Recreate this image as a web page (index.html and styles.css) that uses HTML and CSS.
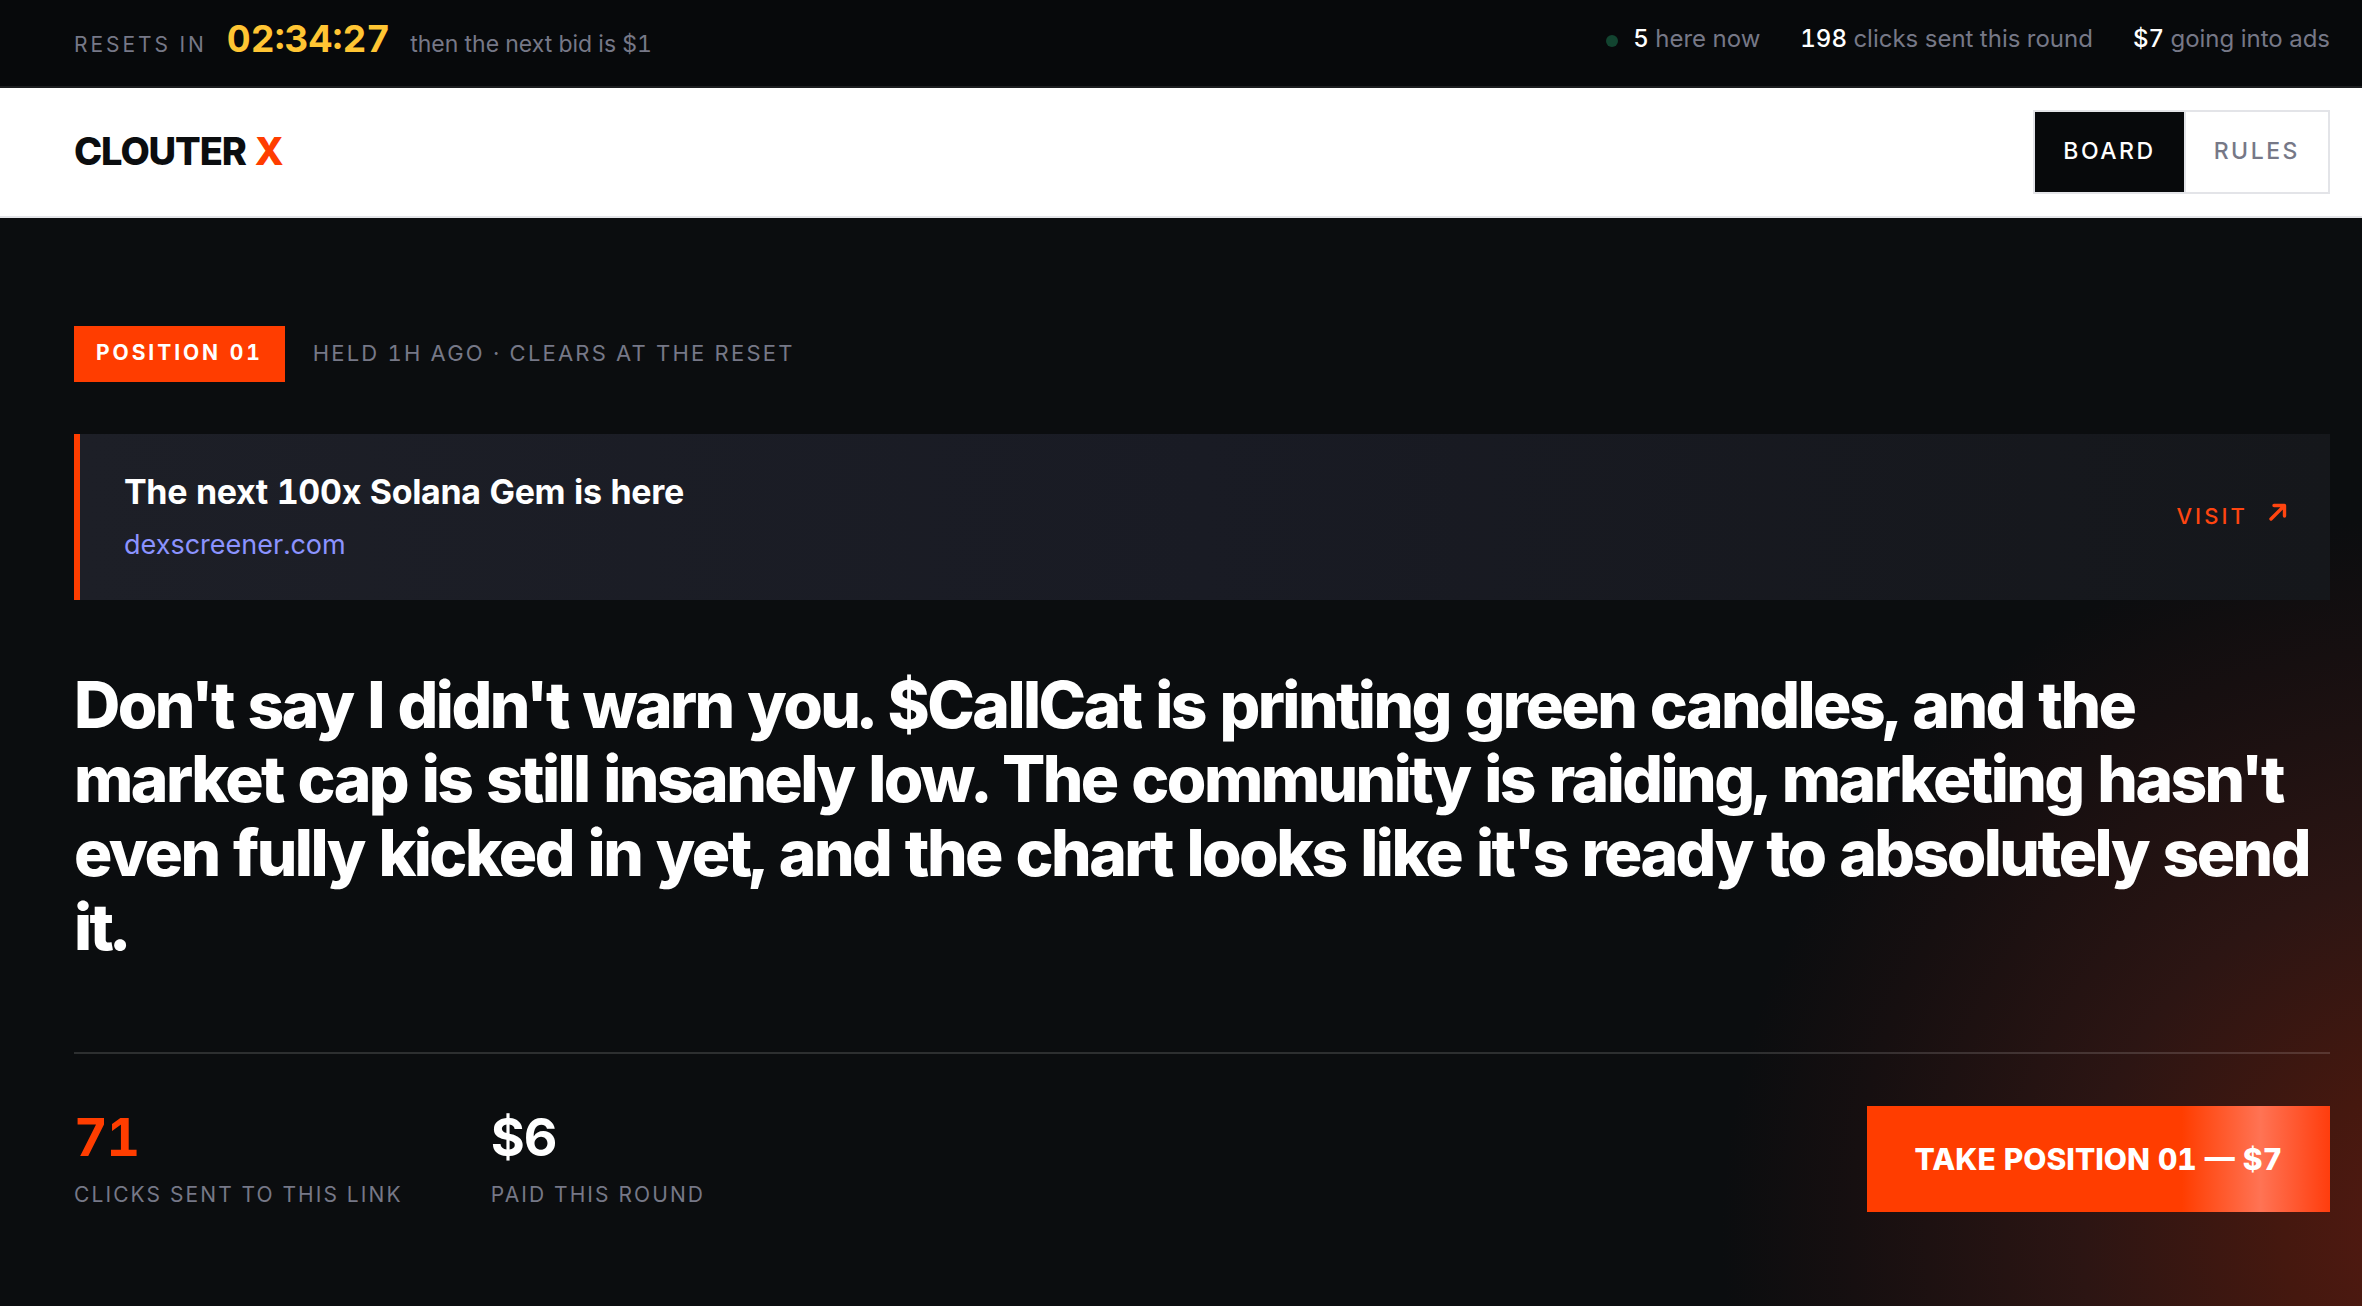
FILE: index.html
```html
<!DOCTYPE html>
<html lang="en">
<head>
    <meta charset="UTF-8">
    <meta name="viewport" content="width=device-width, initial-scale=1.0">
    <title>Clouter X</title>
    <link rel="stylesheet" href="styles.css">
</head>
<body>
    <div class="ticker">
        <div class="countdown">
            <span class="countdown-label">Resets in</span>
            <time class="countdown-time">02:34:27</time>
            <span class="countdown-note">then the next bid is $1</span>
        </div>
        <ul class="live">
            <li><span class="live-dot"></span><b>5</b> here now</li>
            <li><b>198</b> clicks sent this round</li>
            <li><b>$7</b> going into ads</li>
        </ul>
    </div>

    <header class="header">
        <a class="logo" href="#">CLOUTER <span>X</span></a>
        <nav class="tabs">
            <a class="tab active" href="#board">Board</a>
            <a class="tab" href="#rules">Rules</a>
        </nav>
    </header>

    <main class="hero" id="board">
        <div class="meta">
            <span class="badge">Position 01</span>
            <span class="held">Held 1h ago · clears at the reset</span>
        </div>

        <a class="link-card" href="#visit">
            <span class="link-text">
                <span class="link-title">The next 100x Solana Gem is here</span>
                <span class="link-domain">dexscreener.com</span>
            </span>
            <span class="visit">
                Visit
                <svg class="visit-icon" viewBox="0 0 20 20">
                    <path d="M3 17 L16 4 M6 3.5 H16.5 V14"/>
                </svg>
            </span>
        </a>

        <h1 class="message">Don't say I didn't warn you. $CallCat is printing green candles, and the market cap is still insanely low. The community is raiding, marketing hasn't even fully kicked in yet, and the chart looks like it's ready to absolutely send it.</h1>

        <div class="footer-row">
            <dl class="stats">
                <div class="stat">
                    <dd class="stat-value hot">71</dd>
                    <dt class="stat-label">Clicks sent to this link</dt>
                </div>
                <div class="stat">
                    <dd class="stat-value">$6</dd>
                    <dt class="stat-label">Paid this round</dt>
                </div>
            </dl>
            <button class="take" type="button">TAKE POSITION 01 — $7</button>
        </div>
    </main>
</body>
</html>
```
FILE: styles.css
```css
* {
    margin: 0;
    padding: 0;
    box-sizing: border-box;
}

body {
    font-family: Inter, sans-serif;
    font-variant-numeric: tabular-nums;
    display: flex;
    flex-direction: column;
    min-height: 100vh;
    background: #0b0d0f;
    color: #fff;
}

a {
    color: inherit;
    text-decoration: none;
}

.ticker {
    display: flex;
    align-items: center;
    justify-content: space-between;
    height: 88px;
    padding: 0 32px 10px 74px;
    background: #07090b;
    border-bottom: 2px solid #1c1e20;
    color: #767887;
}

.countdown {
    display: flex;
    align-items: baseline;
    gap: 20px;
    padding-top: 2px;
}

.countdown-label {
    font-size: 21px;
    letter-spacing: 0.14em;
    text-transform: uppercase;
}

.countdown-time {
    font-size: 37px;
    line-height: 42px;
    font-weight: 700;
    color: #ffc533;
}

.countdown-note {
    font-size: 23px;
}

.live {
    display: flex;
    gap: 40px;
    list-style: none;
    font-size: 24px;
}

.live b {
    font-weight: 500;
    color: #fff;
}

.live-dot {
    display: inline-block;
    width: 12px;
    height: 12px;
    margin-right: 15px;
    border-radius: 50%;
    background: #124430;
}

.header {
    display: flex;
    align-items: center;
    justify-content: space-between;
    height: 130px;
    padding: 0 32px 0 74px;
    background: #fff;
    border-bottom: 2px solid #e3e4e8;
}

.logo {
    padding-bottom: 2px;
    font-size: 38px;
    font-weight: 800;
    letter-spacing: -0.03em;
    color: #0b0d0f;
}

.logo span {
    color: #ff3d00;
}

.tabs {
    display: flex;
    border: 2px solid #e3e4e8;
}

.tab {
    padding: 0 28px 2px;
    font-size: 23px;
    line-height: 78px;
    font-weight: 500;
    letter-spacing: 0.11em;
    text-transform: uppercase;
    color: #767887;
}

.tab + .tab {
    border-left: 2px solid #e3e4e8;
}

.tab.active {
    background: #07090b;
    color: #fff;
}

.hero {
    flex: 1;
    padding: 108px 32px 94px 74px;
    background: radial-gradient(circle 720px at calc(100% + 80px) calc(100% - 70px), #551a12, #45180f 22%, #2c1513 50%, #160f10 82%, #0b0d0f);
}

.meta {
    display: flex;
    align-items: center;
    gap: 28px;
    margin-bottom: 52px;
    text-transform: uppercase;
}

.badge {
    padding: 0 22px 2px;
    font-size: 21px;
    line-height: 54px;
    font-weight: 700;
    letter-spacing: 0.14em;
    background: #ff3d00;
}

.held {
    padding-bottom: 2px;
    font-size: 22px;
    letter-spacing: 0.1em;
    color: #767887;
}

.link-card {
    display: flex;
    align-items: center;
    justify-content: space-between;
    height: 166px;
    padding: 0 42px 0 44px;
    border-left: 6px solid #ff3d00;
    background: linear-gradient(90deg, #1d1f27, #191b24 50%, #15171b);
}

.link-text {
    display: flex;
    flex-direction: column;
    gap: 12px;
}

.link-title {
    font-size: 34px;
    line-height: 44px;
    font-weight: 700;
    letter-spacing: -0.01em;
}

.link-domain {
    font-size: 27px;
    line-height: 38px;
    color: #8b93ff;
}

.visit {
    display: flex;
    align-items: flex-start;
    gap: 20px;
    padding-bottom: 2px;
    font-size: 22px;
    line-height: 28px;
    font-weight: 500;
    letter-spacing: 0.14em;
    text-transform: uppercase;
    color: #ff4510;
}

.visit-icon {
    width: 20px;
    height: 20px;
    fill: none;
    stroke: currentColor;
    stroke-width: 3.4;
    stroke-linecap: round;
    stroke-linejoin: round;
}

.message {
    margin: 68px 0 88px;
    font-size: 64px;
    line-height: 74px;
    font-weight: 800;
    letter-spacing: -0.04em;
}

.footer-row {
    display: flex;
    align-items: flex-start;
    justify-content: space-between;
    padding-top: 52px;
    border-top: 2px solid rgba(255, 255, 255, 0.14);
}

.stats {
    display: flex;
    gap: 88px;
}

.stat-value {
    font-size: 52px;
    line-height: 64px;
    font-weight: 700;
    letter-spacing: -0.02em;
}

.stat-value.hot {
    color: #ff3d00;
}

.stat-label {
    margin-top: 12px;
    font-size: 21px;
    line-height: 26px;
    letter-spacing: 0.1em;
    text-transform: uppercase;
    color: #767887;
}

.take {
    height: 106px;
    padding: 0 48px;
    border: 0;
    font-family: inherit;
    font-size: 30px;
    font-weight: 800;
    font-variant-numeric: inherit;
    color: #fff;
    background: linear-gradient(90deg, #ff3d00 68%, #ff7354 85%, #ff3d0d);
    cursor: pointer;
}
```
